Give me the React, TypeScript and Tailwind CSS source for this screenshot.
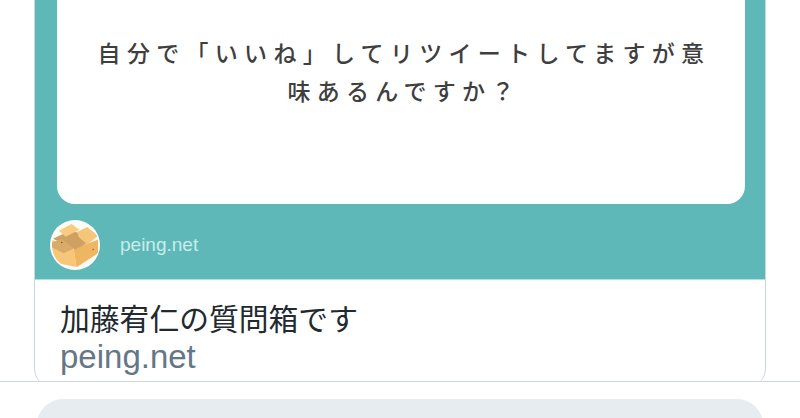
const jp = "font-['Noto_Sans_CJK_JP','Noto_Sans',sans-serif]";

function BoxAvatar() {
  return (
    <div className="w-[50px] h-[50px] rounded-full bg-white flex items-center justify-center shrink-0">
      <svg width="47" height="47" viewBox="0 0 48 48">
        <defs>
          <clipPath id="round">
            <circle cx="24" cy="24" r="24" />
          </clipPath>
        </defs>
        <g clipPath="url(#round)">
          <rect x="0" y="0" width="48" height="48" fill="#fdfbf6" />
          <path d="M0 18 L22 27 L25 46 L6 42 L0 34 Z" fill="#f7c679" />
          <path d="M22 27 L47 18 L47 32 L27 45 L25 46 Z" fill="#efb662" />
          <path d="M1 17 L18 9 L32 12 L42 18 L24 28 Z" fill="#cea163" />
          <path d="M7 9 L20 2 L28 8 L14 15 Z" fill="#f8cb7e" />
          <path d="M26 10 L36 5 L47 14 L36 23 L27 15 Z" fill="#f5c678" />
          <path d="M0 21 L10 17 L22 27 L12 32 L0 26 Z" fill="#d9ab69" />
          <circle cx="10" cy="21" r="0.8" fill="#6b5233" />
          <circle cx="42" cy="28" r="0.8" fill="#8a6a3e" />
        </g>
      </svg>
    </div>
  );
}

export default function App() {
  return (
    <div className="w-[800px] h-[418px] overflow-hidden bg-white flex flex-col">
      <div className="h-[381px] shrink-0 overflow-hidden">
        <div className="mx-[34px] h-[388px] border-x border-[#ccd6dd] rounded-b-[20px] flex flex-col">
          <div className="bg-[#5fb8b8] h-[280px] shrink-0 px-[22px] flex flex-col border-b border-[#b5dcdc]">
            <div className="bg-white h-[204px] -mr-[2px] rounded-b-[18px] flex items-end justify-center pb-[95px] pl-[6px]">
              <p
                className={`${jp} w-[622px] text-center text-[23px] font-medium leading-[38px] tracking-[6.3px] text-[#3f3f3f]`}
              >
                自分で「いいね」してリツイートしてますが意味あるんですか？
              </p>
            </div>
            <div className="flex items-center gap-[20px] -ml-[7px] mt-[16px]">
              <BoxAvatar />
              <span className="font-['Liberation_Sans',sans-serif] text-[19px] text-[#c9ecea]">
                peing.net
              </span>
            </div>
          </div>
          <div className="pl-[25px] pt-[17px] flex flex-col">
            <span className={`${jp} text-[29.8px] leading-[40px] text-[#222a30]`}>
              加藤宥仁の質問箱です
            </span>
            <span className="font-['Liberation_Sans',sans-serif] text-[33px] leading-[40px] text-[#657786]">
              peing.net
            </span>
          </div>
        </div>
      </div>
      <div className="h-px shrink-0 bg-[#ccd6dd]" />
      <div className="mx-[37px] mt-[17px] h-[60px] shrink-0 rounded-[26px] bg-[#e6ecf0]" />
    </div>
  );
}
